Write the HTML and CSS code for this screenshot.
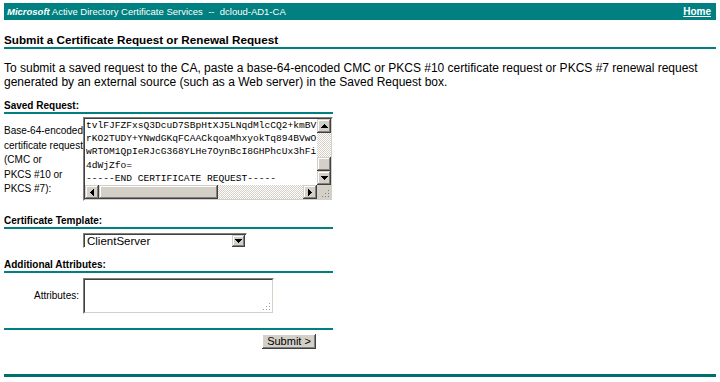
FILE: index.html
```html
<!DOCTYPE html>
<html lang="en">
<head>
    <meta charset="UTF-8">
    <title>Microsoft Active Directory Certificate Services</title>
    <link rel="stylesheet" href="styles.css">
</head>
<body>
    <div class="topbar">
        <span class="brand"><i>Microsoft</i> Active Directory Certificate Services &nbsp;--&nbsp; dcloud-AD1-CA</span>
        <a class="home" href="#">Home</a>
    </div>

    <h1 class="page-title">Submit a Certificate Request or Renewal Request</h1>

    <p class="intro">To submit a saved request to the CA, paste a base-64-encoded CMC or PKCS #10 certificate request or PKCS #7 renewal request generated by an external source (such as a Web server) in the Saved Request box.</p>

    <form class="req" onsubmit="event.preventDefault();">
        <h2 class="sec-head">Saved Request:</h2>
        <div class="row">
            <div class="lbl lbl-left">Base-64-encoded<br>certificate request<br>(CMC or<br>PKCS #10 or<br>PKCS #7):</div>
            <div class="textbox">
                <div class="textbox-in">
                    <pre class="tb-text">tvlFJFZFxsQ3DcuD7SBpHtXJ5LNqdMlcCQ2+kmBV
rKO2TUDY+YNwdGKqFCAACkqoaMhxyokTq894BVwO
wRTOM1QpIeRJcG368YLHe7OynBcI8GHPhcUx3hFi
4dWjZfo=
-----END CERTIFICATE REQUEST-----</pre>
                    <div class="vscroll">
                        <span class="sb-btn"><svg width="7" height="4" viewBox="0 0 7 4"><path d="M3 0h1v1h1v1h1v1h1v1H0V3h1V2h1V1h1z" fill="#000"/></svg></span>
                        <span class="sb-track"></span>
                        <span class="sb-btn sb-thumb"></span>
                        <span class="sb-btn"><svg width="7" height="4" viewBox="0 0 7 4"><path d="M0 0h7v1H6v1H5v1H4v1H3V3H2V2H1V1H0z" fill="#000"/></svg></span>
                    </div>
                    <div class="hscroll">
                        <span class="sb-btn"><svg width="4" height="7" viewBox="0 0 4 7"><path d="M3 0h1v7H3V6H2V5H1V4H0V3h1V2h1V1h1z" fill="#000"/></svg></span>
                        <span class="sb-btn sb-hthumb"></span>
                        <span class="sb-track"></span>
                        <span class="sb-btn"><svg width="4" height="7" viewBox="0 0 4 7"><path d="M0 0h1v1h1v1h1v1h1v1H3v1H2v1H1v1H0z" fill="#000"/></svg></span>
                    </div>
                    <div class="corner"><svg width="11" height="11" viewBox="0 0 11 11"><g fill="#808080"><rect x="8" y="2" width="1" height="1"/><rect x="5" y="5" width="1" height="1"/><rect x="8" y="5" width="1" height="1"/><rect x="2" y="8" width="1" height="1"/><rect x="5" y="8" width="1" height="1"/><rect x="8" y="8" width="1" height="1"/></g></svg></div>
                </div>
            </div>
        </div>

        <h2 class="sec-head gap-lg">Certificate Template:</h2>
        <div class="row row-top">
            <div class="lbl"></div>
            <div class="select">
                <span class="select-val">ClientServer</span>
                <span class="sb-btn"><svg width="7" height="4" viewBox="0 0 7 4"><path d="M0 0h7v1H6v1H5v1H4v1H3V3H2V2H1V1H0z" fill="#000"/></svg></span>
            </div>
        </div>

        <h2 class="sec-head gap-md">Additional Attributes:</h2>
        <div class="row row-attr">
            <div class="lbl lbl-right">Attributes:</div>
            <div class="textbox attr-box">
                <div class="textbox-in attr-in">
                    <div class="corner attr-grip"><svg width="11" height="11" viewBox="0 0 11 11"><g fill="#a0a0a0"><rect x="8" y="2" width="1" height="1"/><rect x="5" y="5" width="1" height="1"/><rect x="8" y="5" width="1" height="1"/><rect x="2" y="8" width="1" height="1"/><rect x="5" y="8" width="1" height="1"/><rect x="8" y="8" width="1" height="1"/></g></svg></div>
                </div>
            </div>
        </div>

        <div class="rule"></div>
        <div class="actions">
            <button class="submit" type="submit">Submit &gt;</button>
        </div>
    </form>

    <div class="foot-rule"></div>
</body>
</html>
```

FILE: styles.css
```css
* { box-sizing: border-box; }
body { margin: 3px 4px; font-family: 'Liberation Sans', Arial, sans-serif; color: #000; background: #fff; }

.topbar { height: 17px; background: #008080; color: #fff; display: flex; align-items: center; justify-content: space-between; padding: 0 5px 0 3px; font-size: 9.5px; }
.brand i { font-weight: bold; }
.home { color: #fff; font-weight: bold; text-decoration: underline; font-size: 10px; }

.page-title { font-size: 11.7px; line-height: 14px; margin: 13px 0 0; border-bottom: 2px solid #008080; }
.intro { font-size: 12px; line-height: 14px; margin: 12px 0 0; }

.req { width: 329px; }
.sec-head { font-size: 10px; line-height: 12px; margin: 11px 0 0; border-bottom: 2px solid #008080; }
.gap-lg { margin-top: 14px; }
.gap-md { margin-top: 11px; }

.row { display: flex; align-items: center; margin-top: 3px; }
.row-top { margin-top: 4px; }
.row-attr { margin-top: 5px; }
.lbl { width: 79px; flex: none; font-size: 10px; line-height: 14.5px; white-space: nowrap; padding-top: 3px; }
.lbl-right { text-align: right; padding-right: 4px; padding-top: 0; }

.textbox { width: 250px; height: 84px; border: 1px solid; border-color: #808080 #fff #fff #808080; }
.textbox-in { height: 100%; border: 1px solid; border-color: #404040 #d4d0c8 #d4d0c8 #404040; background: #fff; display: grid; grid-template-columns: 1fr 14px; grid-template-rows: 1fr 14px; overflow: hidden; }
.tb-text { margin: 0; padding: 0 0 0 1px; font-family: 'Liberation Mono', 'Courier New', monospace; font-size: 9.6px; line-height: 13.2px; overflow: hidden; white-space: pre; }

.sb-btn { display: flex; align-items: center; justify-content: center; width: 14px; height: 14px; flex: none; background: #d4d0c8; box-shadow: inset -1px -1px #404040, inset 1px 1px #d4d0c8, inset -2px -2px #808080, inset 2px 2px #fff; }
.sb-track { flex: 1; background: repeating-conic-gradient(#fff 0 25%, #d4d0c8 0 50%) 0 0 / 2px 2px; }
.vscroll { display: flex; flex-direction: column; }
.hscroll { display: flex; }
.sb-hthumb { width: 119px; }
.corner { background: #d4d0c8; display: flex; align-items: flex-end; justify-content: flex-end; }

.select { width: 164px; height: 15px; border: 1px solid; border-color: #808080 #fff #fff #808080; box-shadow: inset 1px 1px #404040; background: #fff; display: flex; align-items: center; justify-content: space-between; padding: 1px 1px 0 3px; font-size: 11.5px; }
.select .sb-btn { height: 12px; width: 13px; }
.select-val { line-height: 12px; }

.attr-box { width: 191px; height: 36px; }
.attr-in { display: flex; align-items: flex-end; justify-content: flex-end; }
.attr-grip { background: transparent; }

.rule { margin-top: 14px; border-bottom: 2px solid #008080; }
.actions { display: flex; padding: 4px 0 0 258px; }
.submit { width: 54px; height: 15px; padding: 0; border: none; font-family: inherit; font-size: 11px; line-height: 13px; color: #000; background: #d4d0c8; box-shadow: inset -1px -1px #404040, inset 1px 1px #fff, inset -2px -2px #808080; }

.foot-rule { margin-top: 25px; border-bottom: 3px solid #006f73; }
```
